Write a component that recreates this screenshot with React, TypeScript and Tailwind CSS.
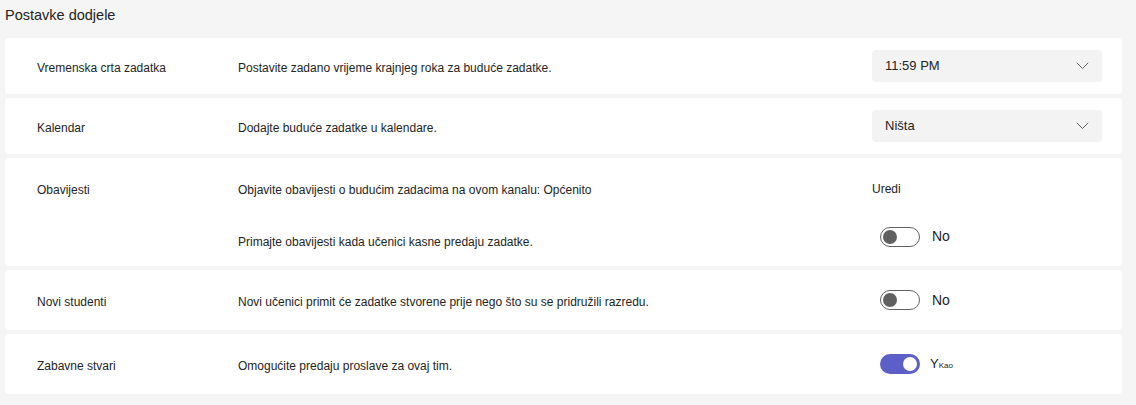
import { ReactNode } from "react"

function Chevron() {
  return (
    <svg width="13" height="8" viewBox="0 0 13 8" fill="none" className="text-[#616161]">
      <path d="M0.8 0.8 L6.5 6.5 L12.2 0.8" stroke="currentColor" strokeWidth="1" />
    </svg>
  )
}

function Dropdown({ value }: { value: string }) {
  return (
    <div className="flex items-center justify-between h-8 w-[230px] rounded-[4px] bg-[#f3f3f3] pl-[13px] pr-[13px]">
      <span className="text-[13px] text-[#242424]">{value}</span>
      <Chevron />
    </div>
  )
}

function Toggle({ on, raised, children }: { on?: boolean; raised?: boolean; children: ReactNode }) {
  return (
    <div className={raised ? "flex items-center gap-3 pl-2 -mt-2" : "flex items-center gap-3 pl-2"}>
      {on ? (
        <div className="flex items-center justify-end w-10 h-5 rounded-full bg-[#5b5fc7] pr-[3px]">
          <div className="size-[14px] rounded-full bg-white" />
        </div>
      ) : (
        <div className="flex items-center w-10 h-5 rounded-full border border-[#616161] bg-white pl-[2px]">
          <div className="size-[14px] rounded-full bg-[#616161]" />
        </div>
      )}
      {children}
    </div>
  )
}

function Row({ label, desc, control }: { label?: string; desc: string; control: ReactNode }) {
  return (
    <div className="flex items-center">
      <div className="w-[233px] shrink-0 pl-8 pt-[3px] text-[12px]">{label}</div>
      <div className="flex-1 min-w-0 pt-[3px] text-[12px]">{desc}</div>
      <div className="w-[230px] shrink-0">{control}</div>
    </div>
  )
}

export default function App() {
  return (
    <div
      className="min-h-[405px] bg-[#f5f5f5] pl-[5px] pr-[14px] text-[#242424]"
      style={{ fontFamily: "'Liberation Sans', Arial, sans-serif" }}
    >
      <h2 className="pt-[5px] h-[38px] text-[14.5px] leading-5">Postavke dodjele</h2>
      <div className="flex flex-col gap-1">
        <section className="bg-white rounded-[4px] h-14 flex flex-col justify-center pr-5">
          <Row
            label="Vremenska crta zadatka"
            desc="Postavite zadano vrijeme krajnjeg roka za buduće zadatke."
            control={<Dropdown value="11:59 PM" />}
          />
        </section>
        <section className="bg-white rounded-[4px] h-14 flex flex-col justify-center pr-5">
          <Row label="Kalendar" desc="Dodajte buduće zadatke u kalendare." control={<Dropdown value="Ništa" />} />
        </section>
        <section className="bg-white rounded-[4px] h-[108px] flex flex-col pt-[18px] gap-[30px] pr-5">
          <Row
            label="Obavijesti"
            desc="Objavite obavijesti o budućim zadacima na ovom kanalu: Općenito"
            control={<span className="text-[12px]">Uredi</span>}
          />
          <Row
            desc="Primajte obavijesti kada učenici kasne predaju zadatke."
            control={
              <Toggle raised>
                <span className="text-[14px]">No</span>
              </Toggle>
            }
          />
        </section>
        <section className="bg-white rounded-[4px] h-[60px] flex flex-col justify-center pr-5">
          <Row
            label="Novi studenti"
            desc="Novi učenici primit će zadatke stvorene prije nego što su se pridružili razredu."
            control={
              <Toggle>
                <span className="text-[14px]">No</span>
              </Toggle>
            }
          />
        </section>
        <section className="bg-white rounded-[4px] h-[60px] flex flex-col justify-center pr-5">
          <Row
            label="Zabavne stvari"
            desc="Omogućite predaju proslave za ovaj tim."
            control={
              <Toggle on>
                <span className="text-[13px] -ml-[2px]">
                  Y<span className="text-[8px]">Kao</span>
                </span>
              </Toggle>
            }
          />
        </section>
      </div>
    </div>
  )
}
